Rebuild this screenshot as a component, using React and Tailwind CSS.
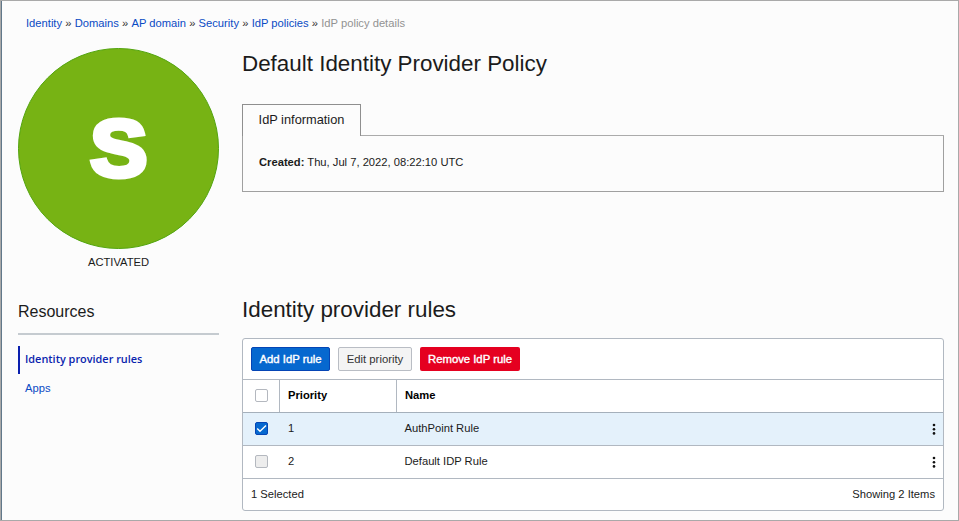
const crumbs = ["Identity", "Domains", "AP domain", "Security", "IdP policies"];

function Breadcrumbs() {
  return (
    <nav className="flex h-[14px] items-center gap-[3.2px] whitespace-nowrap pl-2 text-[11.2px] leading-[14px] text-[#0a4bc4]">
      {crumbs.map((c) => (
        <span key={c} className="flex gap-[3.2px]">
          <a>{c}</a>
          <span className="text-[#333]">»</span>
        </span>
      ))}
      <span className="text-[#929292]">IdP policy details</span>
    </nav>
  );
}

function Checkbox({ checked, disabled }) {
  if (checked) {
    return (
      <span className="flex size-[13px] items-center justify-center rounded-[2px] border border-[#0545b5] bg-[#0668cf]">
        <svg viewBox="0 0 11 11" className="size-[11px]" fill="none" stroke="#fff" strokeWidth="1.4">
          <path d="M1.2 5.4 4 8.2 10 2.4" />
        </svg>
      </span>
    );
  }
  return (
    <span className={`size-[13px] rounded-[2px] border border-[#b4b8bf] ${disabled ? "bg-[#ededed]" : "bg-white"}`} />
  );
}

function Kebab() {
  return (
    <svg viewBox="0 0 4 12" className="h-[12px] w-[4px]" fill="#111">
      <circle cx="2" cy="2" r="1.3" />
      <circle cx="2" cy="6.2" r="1.3" />
      <circle cx="2" cy="10.4" r="1.3" />
    </svg>
  );
}

function Row({ priority, name, checked, disabled }) {
  return (
    <div className={`flex h-[33px] items-center border-b border-[#b1b8c1] ${checked ? "bg-[#e4f1fb]" : "bg-white"}`}>
      <div className="flex w-[36px] justify-center pb-[2px]"><Checkbox checked={checked} disabled={disabled} /></div>
      <div className="w-[118px] pb-[2px] pl-[9px]">{priority}</div>
      <div className="grow pb-[2px] pl-[7.5px]">{name}</div>
      <div className="pr-[7px]"><Kebab /></div>
    </div>
  );
}

export default function App() {
  return (
    <div className="flex h-[521px] w-[959px] flex-col border border-[#a9a9a9] bg-[#fcfcfc] font-['Liberation_Sans',Arial,sans-serif] text-[11.2px] text-[#1b1b1b]">
      <div className="flex h-full flex-col border-l border-[#61788a] pl-4 pr-[14px] pt-[15px]">
        <Breadcrumbs />
        <div className="flex pt-[17px]">
          <aside className="w-[201px] shrink-0">
            <div className="mt-[1px] flex size-[201px] items-center justify-center rounded-full border border-[#53a50f] bg-[#77b314] text-[80px] font-bold leading-none text-white">
              <span className="scale-x-[1.07] [-webkit-text-stroke:5px_white]">S</span>
            </div>
            <div className="mt-[6px] text-center leading-[14px]">ACTIVATED</div>
            <h3 className="mt-[33px] h-[33px] border-b-2 border-[#c5cbd0] text-[16px] leading-[20px]">Resources</h3>
            <ul className="mt-[11px] text-[#0b4bc4]">
              <li className="flex h-[28px] items-center border-l-2 border-[#0a1fae] pb-[2px] pl-[5px] font-['Open_Sans',sans-serif] text-[10.9px] font-semibold text-[#0a24ae]">
                Identity provider rules
              </li>
              <li className="flex h-[28px] items-center pl-[7px]">Apps</li>
            </ul>
          </aside>
          <main className="ml-[23px] w-[702px]">
            <h1 className="mt-[4px] h-[26px] whitespace-nowrap text-[22.4px] leading-[26px]">Default Identity Provider Policy</h1>
            <div className="mt-[27px] flex h-[32px]">
              <div className="flex w-[119px] items-center justify-center border-l border-r border-t border-[#8f8f8f] pb-[2px] text-[12.8px]">
                IdP information
              </div>
              <div className="grow border-b border-[#ababab]" />
            </div>
            <div className="h-[56px] border-x border-b border-[#a0a0a0] pl-4 pt-[19px] leading-[14px]">
              <b>Created:</b> Thu, Jul 7, 2022, 08:22:10 UTC
            </div>
            <h2 className="mt-[105px] h-[26px] text-[22.4px] leading-[26px]">Identity provider rules</h2>
            <section className="mt-[15px] h-[173px] rounded-[3px] border border-[#b1b8c1] bg-white">
              <div className="flex h-[41px] items-center gap-2 border-b border-[#b1b8c1] pl-2 text-[11.3px]">
                <button className="h-[24px] w-[79px] rounded-[2px] border border-[#0545b5] bg-[#0668cf] text-white [-webkit-text-stroke:0.4px_white]">Add IdP rule</button>
                <button className="h-[24px] w-[74px] rounded-[2px] border border-[#b9bdc4] bg-[#f4f4f4] text-[#333]">Edit priority</button>
                <button className="h-[24px] w-[100px] rounded-[2px] bg-[#e50020] text-white [-webkit-text-stroke:0.4px_white]">Remove IdP rule</button>
              </div>
              <div className="flex h-[33px] items-stretch border-b border-[#a5b0bb] font-bold text-black">
                <div className="flex w-[37px] items-center justify-center border-r border-[#b1b8c1] pb-[2px]"><Checkbox /></div>
                <div className="flex w-[117px] items-center border-r border-[#b1b8c1] pb-[2px] pl-2">Priority</div>
                <div className="flex items-center pb-[2px] pl-2">Name</div>
              </div>
              <Row priority="1" name="AuthPoint Rule" checked />
              <Row priority="2" name="Default IDP Rule" disabled />
              <div className="flex h-[30px] items-center justify-between px-2">
                <span>1 Selected</span>
                <span>Showing 2 Items</span>
              </div>
            </section>
          </main>
        </div>
      </div>
    </div>
  );
}
